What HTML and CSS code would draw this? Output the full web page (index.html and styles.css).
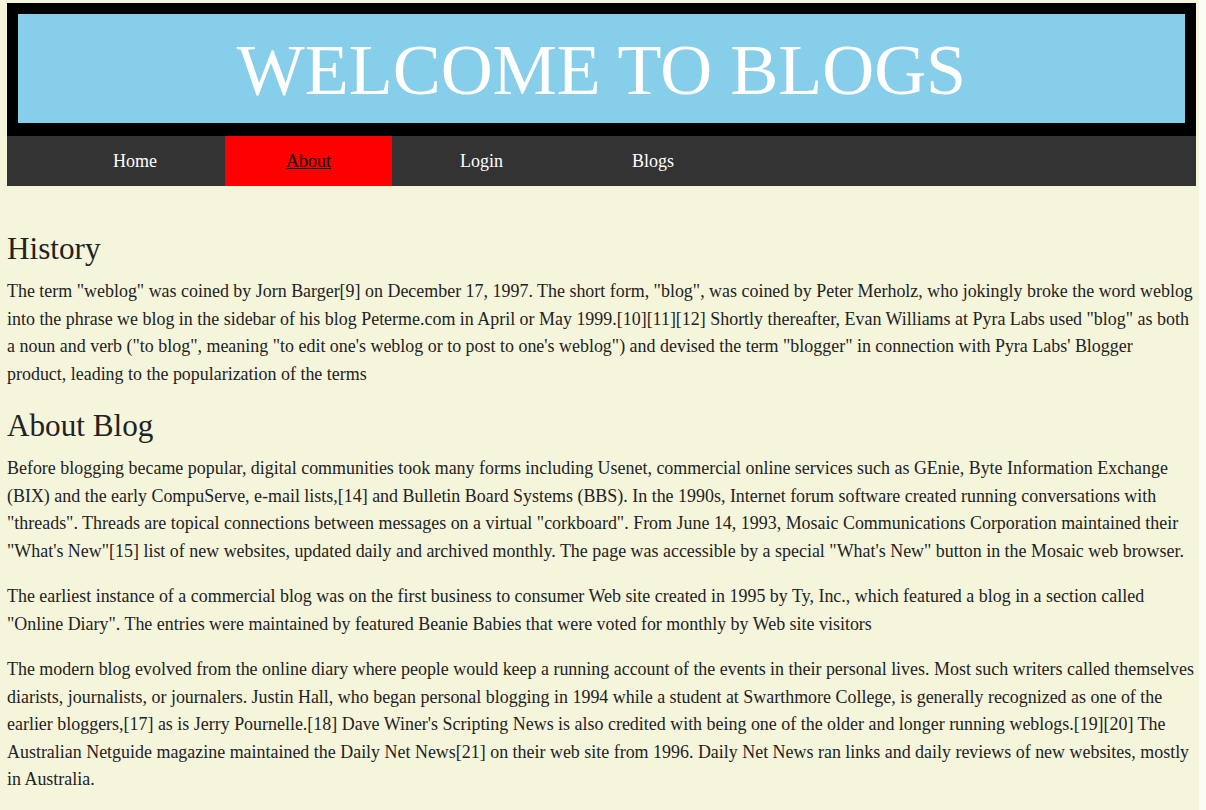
FILE: index.html
```html
<!DOCTYPE html>
<html lang="en">
<head>
<meta charset="utf-8">
<title>Welcome to Blogs</title>
<link rel="stylesheet" href="styles.css">
</head>
<body>
<div class="page">
  <header class="banner">
    <h1 class="banner-title">WELCOME TO BLOGS</h1>
  </header>
  <nav class="nav">
    <a class="nav-link" href="#">Home</a>
    <a class="nav-link active" href="#">About</a>
    <a class="nav-link" href="#">Login</a>
    <a class="nav-link" href="#">Blogs</a>
  </nav>
  <main class="content">
    <h2 class="section-title first">History</h2>
    <p class="text">The term "weblog" was coined by Jorn Barger[9] on December 17, 1997. The short form, "blog", was coined by Peter Merholz, who jokingly broke the word weblog into the phrase we blog in the sidebar of his blog Peterme.com in April or May 1999.[10][11][12] Shortly thereafter, Evan Williams at Pyra Labs used "blog" as both a noun and verb ("to blog", meaning "to edit one's weblog or to post to one's weblog") and devised the term "blogger" in connection with Pyra Labs' Blogger product, leading to the popularization of the terms</p>
    <h2 class="section-title">About Blog</h2>
    <p class="text">Before blogging became popular, digital communities took many forms including Usenet, commercial online services such as GEnie, Byte Information Exchange (BIX) and the early CompuServe, e-mail lists,[14] and Bulletin Board Systems (BBS). In the 1990s, Internet forum software created running conversations with "threads". Threads are topical connections between messages on a virtual "corkboard". From June 14, 1993, Mosaic Communications Corporation maintained their "What's New"[15] list of new websites, updated daily and archived monthly. The page was accessible by a special "What's New" button in the Mosaic web browser.</p>
    <p class="text">The earliest instance of a commercial blog was on the first business to consumer Web site created in 1995 by Ty, Inc., which featured a blog in a section called "Online Diary". The entries were maintained by featured Beanie Babies that were voted for monthly by Web site visitors</p>
    <p class="text">The modern blog evolved from the online diary where people would keep a running account of the events in their personal lives. Most such writers called themselves diarists, journalists, or journalers. Justin Hall, who began personal blogging in 1994 while a student at Swarthmore College, is generally recognized as one of the earlier bloggers,[17] as is Jerry Pournelle.[18] Dave Winer's Scripting News is also credited with being one of the older and longer running weblogs.[19][20] The Australian Netguide magazine maintained the Daily Net News[21] on their web site from 1996. Daily Net News ran links and daily reviews of new websites, mostly in Australia.</p>
  </main>
</div>
</body>
</html>
```

FILE: styles.css
```css
html {
  background: #fcfcf6;
}
body {
  margin: 0;
  font-family: "Liberation Serif", "Times New Roman", serif;
  color: #222;
}
.page {
  width: 1199px;
  min-height: 810px;
  box-sizing: border-box;
  padding: 3px 3px 0 7px;
  background: #f5f5dc;
}
.banner {
  border-style: solid;
  border-color: #000;
  border-width: 11px 11px 13px 11px;
  background: #87ceeb;
}
.banner-title {
  margin: 0;
  padding-top: 4px;
  height: 105px;
  line-height: 105px;
  font-size: 72px;
  font-weight: normal;
  text-align: center;
  color: #fff;
}
.nav {
  display: flex;
  gap: 7px;
  height: 50px;
  padding-left: 45px;
  background: #333;
}
.nav-link {
  display: block;
  padding: 0 61px;
  line-height: 50px;
  font-size: 18px;
  color: #fff;
  text-decoration: none;
}
.nav-link.active {
  background: #ff0000;
  color: #000;
  text-decoration: underline;
}
.content {
  padding-bottom: 10px;
}
.section-title {
  margin: 20px 0 11px;
  font-size: 31.2px;
  line-height: 36px;
  font-weight: normal;
  color: #222;
}
.section-title.first {
  margin-top: 45px;
}
.text {
  margin: 0 0 18px;
  font-size: 17.95px;
  line-height: 27.5px;
}
```
